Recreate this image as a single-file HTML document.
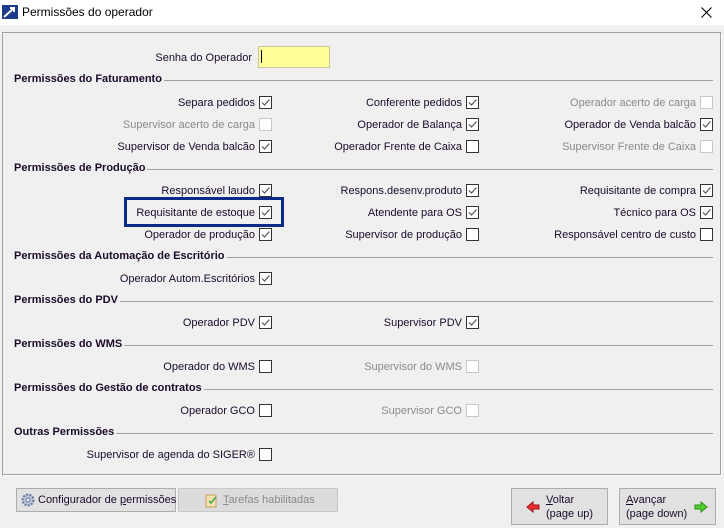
<!DOCTYPE html>
<html><head><meta charset="utf-8"><style>
body{margin:0;width:724px;height:528px;background:#f0f0f0;font-family:"Liberation Sans",Tahoma,sans-serif;font-size:11px;color:#1a0a2a;position:relative;overflow:hidden}
.t{position:absolute;white-space:nowrap;line-height:14px}
.l{position:absolute;white-space:nowrap;line-height:14px;text-align:right}
.d{color:#8a8a8a}
.cb{position:absolute;width:11px;height:11px;border:1px solid #333;background:#fff}
.cb.dis{border-color:#c8c8c8}
.cb svg{position:absolute;left:0;top:0}
.h{position:absolute;left:5px;width:708px;height:14px}
.h:before{content:"";position:absolute;left:0;right:0;top:7px;border-top:1px solid #a0a0a0}
.h span{position:relative;background:#f0f0f0;font-weight:bold;padding:0 2px 0 9px;color:#1a0a2a;margin-left:-9px;left:9px}
.btn{position:absolute;border:1px solid #adadad;background:#e1e1e1;box-sizing:border-box;font-size:11px}
#w{position:absolute;left:0;top:1px;width:724px;height:470px}
</style></head><body>
<div style="position:absolute;left:0;top:0;width:724px;height:25px;background:#fff"></div>
<svg style="position:absolute;left:2px;top:5px" width="16" height="14" viewBox="0 0 16 14"><rect width="16" height="14" fill="#1b3c8c"/><path d="M2 12 L12 3 M8 3 H12 V7" stroke="#fff" stroke-width="2" fill="none"/></svg>
<div class="t" style="left:22px;top:5px;font-size:12px;color:#000">Permissões do operador</div>
<svg style="position:absolute;left:701px;top:7px" width="11" height="11"><path d="M0.5 0.5L10.5 10.5M10.5 0.5L0.5 10.5" stroke="#000" stroke-width="1.1"/></svg>
<div style="position:absolute;left:2px;top:32px;width:718px;height:442px;border:1px solid #a0a0a0;border-right-color:#fff;border-bottom-color:#fff;box-shadow:inset -1px -1px 0 #a0a0a0"></div>
<div id="w">
<div class="l" style="right:472px;top:50px">Senha do Operador</div>
<div style="position:absolute;left:258px;top:45px;width:70px;height:20px;background:#ffff99;border:1px solid #c8c8a0"></div>
<div style="position:absolute;left:261px;top:49px;width:1px;height:13px;background:#000"></div>

<div class="h" style="top:72px"><span>Permissões do Faturamento</span></div>
<div class="h" style="top:161px"><span>Permissões de Produção</span></div>
<div class="h" style="top:249px"><span>Permissões da Automação de Escritório</span></div>
<div class="h" style="top:293px"><span>Permissões do PDV</span></div>
<div class="h" style="top:337px"><span>Permissões do WMS</span></div>
<div class="h" style="top:381px"><span>Permissões do Gestão de contratos</span></div>
<div class="h" style="top:425px"><span>Outras Permissões</span></div>

<div class="l" style="right:469px;top:95px">Separa pedidos</div><div class="cb" style="left:259px;top:95px"><svg width="11" height="11"><path d="M2 5.5L4.5 8L9.5 2.5" stroke="#555" stroke-width="1.2" fill="none"/></svg></div>
<div class="l" style="right:262px;top:95px">Conferente pedidos</div><div class="cb" style="left:466px;top:95px"><svg width="11" height="11"><path d="M2 5.5L4.5 8L9.5 2.5" stroke="#555" stroke-width="1.2" fill="none"/></svg></div>
<div class="l d" style="right:28px;top:95px">Operador acerto de carga</div><div class="cb dis" style="left:700px;top:95px"></div>

<div class="l d" style="right:469px;top:117px">Supervisor acerto de carga</div><div class="cb dis" style="left:259px;top:117px"></div>
<div class="l" style="right:262px;top:117px">Operador de Balança</div><div class="cb" style="left:466px;top:117px"><svg width="11" height="11"><path d="M2 5.5L4.5 8L9.5 2.5" stroke="#555" stroke-width="1.2" fill="none"/></svg></div>
<div class="l" style="right:28px;top:117px">Operador de Venda balcão</div><div class="cb" style="left:700px;top:117px"><svg width="11" height="11"><path d="M2 5.5L4.5 8L9.5 2.5" stroke="#555" stroke-width="1.2" fill="none"/></svg></div>

<div class="l" style="right:469px;top:139px">Supervisor de Venda balcão</div><div class="cb" style="left:259px;top:139px"><svg width="11" height="11"><path d="M2 5.5L4.5 8L9.5 2.5" stroke="#555" stroke-width="1.2" fill="none"/></svg></div>
<div class="l" style="right:262px;top:139px">Operador Frente de Caixa</div><div class="cb" style="left:466px;top:139px"></div>
<div class="l d" style="right:28px;top:139px">Supervisor Frente de Caixa</div><div class="cb dis" style="left:700px;top:139px"></div>

<div class="l" style="right:469px;top:183px">Responsável laudo</div><div class="cb" style="left:259px;top:183px"><svg width="11" height="11"><path d="M2 5.5L4.5 8L9.5 2.5" stroke="#555" stroke-width="1.2" fill="none"/></svg></div>
<div class="l" style="right:262px;top:183px">Respons.desenv.produto</div><div class="cb" style="left:466px;top:183px"><svg width="11" height="11"><path d="M2 5.5L4.5 8L9.5 2.5" stroke="#555" stroke-width="1.2" fill="none"/></svg></div>
<div class="l" style="right:28px;top:183px">Requisitante de compra</div><div class="cb" style="left:700px;top:183px"><svg width="11" height="11"><path d="M2 5.5L4.5 8L9.5 2.5" stroke="#555" stroke-width="1.2" fill="none"/></svg></div>

<div style="position:absolute;left:124px;top:196px;width:154px;height:24px;border:3px solid #0a2a8a"></div>
<div class="l" style="right:469px;top:205px">Requisitante de estoque</div><div class="cb" style="left:259px;top:205px"><svg width="11" height="11"><path d="M2 5.5L4.5 8L9.5 2.5" stroke="#555" stroke-width="1.2" fill="none"/></svg></div>
<div class="l" style="right:262px;top:205px">Atendente para OS</div><div class="cb" style="left:466px;top:205px"><svg width="11" height="11"><path d="M2 5.5L4.5 8L9.5 2.5" stroke="#555" stroke-width="1.2" fill="none"/></svg></div>
<div class="l" style="right:28px;top:205px">Técnico para OS</div><div class="cb" style="left:700px;top:205px"><svg width="11" height="11"><path d="M2 5.5L4.5 8L9.5 2.5" stroke="#555" stroke-width="1.2" fill="none"/></svg></div>

<div class="l" style="right:469px;top:227px">Operador de produção</div><div class="cb" style="left:259px;top:227px"><svg width="11" height="11"><path d="M2 5.5L4.5 8L9.5 2.5" stroke="#555" stroke-width="1.2" fill="none"/></svg></div>
<div class="l" style="right:262px;top:227px">Supervisor de produção</div><div class="cb" style="left:466px;top:227px"></div>
<div class="l" style="right:28px;top:227px">Responsável centro de custo</div><div class="cb" style="left:700px;top:227px"></div>

<div class="l" style="right:469px;top:271px">Operador Autom.Escritórios</div><div class="cb" style="left:259px;top:271px"><svg width="11" height="11"><path d="M2 5.5L4.5 8L9.5 2.5" stroke="#555" stroke-width="1.2" fill="none"/></svg></div>

<div class="l" style="right:469px;top:315px">Operador PDV</div><div class="cb" style="left:259px;top:315px"><svg width="11" height="11"><path d="M2 5.5L4.5 8L9.5 2.5" stroke="#555" stroke-width="1.2" fill="none"/></svg></div>
<div class="l" style="right:262px;top:315px">Supervisor PDV</div><div class="cb" style="left:466px;top:315px"><svg width="11" height="11"><path d="M2 5.5L4.5 8L9.5 2.5" stroke="#555" stroke-width="1.2" fill="none"/></svg></div>

<div class="l" style="right:469px;top:359px">Operador do WMS</div><div class="cb" style="left:259px;top:359px"></div>
<div class="l d" style="right:262px;top:359px">Supervisor do WMS</div><div class="cb dis" style="left:466px;top:359px"></div>

<div class="l" style="right:469px;top:403px">Operador GCO</div><div class="cb" style="left:259px;top:403px"></div>
<div class="l d" style="right:262px;top:403px">Supervisor GCO</div><div class="cb dis" style="left:466px;top:403px"></div>

<div class="l" style="right:469px;top:447px">Supervisor de agenda do SIGER®</div><div class="cb" style="left:259px;top:447px"></div>
</div>

<div class="btn" style="left:16px;top:488px;width:160px;height:24px">
<svg style="position:absolute;left:4px;top:4px" width="14" height="14" viewBox="0 0 14 14"><circle cx="7" cy="7" r="5.5" fill="#b8c4dc" stroke="#6a7898" stroke-dasharray="2 1.4" stroke-width="2"/><circle cx="7" cy="7" r="2" fill="#f0f0f0" stroke="#6a7898"/></svg>
<span class="t" style="left:21px;top:4px">Configurador de <u>p</u>ermissões</span></div>
<div class="btn" style="left:178px;top:488px;width:160px;height:24px;background:#dcdcdc;border-color:#c8c8c8">
<svg style="position:absolute;left:26px;top:4px" width="13" height="15"><rect x="1" y="2" width="10" height="12" fill="#f4e0b0" stroke="#c8a060"/><path d="M4 8l2 2 5-6" stroke="#4a4" stroke-width="1.5" fill="none"/></svg>
<span class="t" style="left:44px;top:4px;color:#8a8a8a"><u>T</u>arefas habilitadas</span></div>
<div class="btn" style="left:511px;top:488px;width:97px;height:37px">
<svg style="position:absolute;left:14px;top:12px" width="14" height="12"><path d="M1 6L7 1V4H13V8H7V11Z" fill="#e83030" stroke="#a01010"/></svg>
<span class="t" style="left:34px;top:4px"><u>V</u>oltar<br>(page up)</span></div>
<div class="btn" style="left:619px;top:488px;width:97px;height:37px">
<svg style="position:absolute;left:74px;top:12px" width="14" height="12"><path d="M13 6L7 1V4H1V8H7V11Z" fill="#50d030" stroke="#309010"/></svg>
<span class="t" style="left:6px;top:4px"><u>A</u>vançar<br>(page down)</span></div>
</body></html>
